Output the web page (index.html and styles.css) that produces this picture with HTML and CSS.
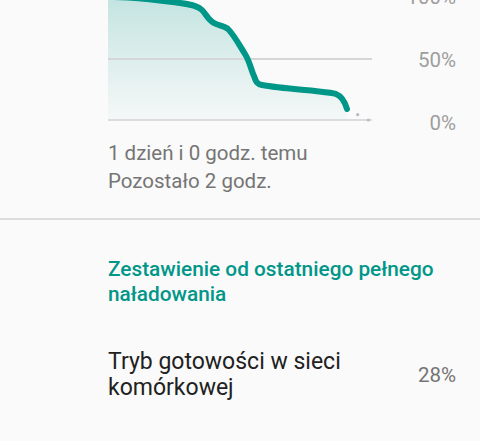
FILE: index.html
```html
<!DOCTYPE html>
<html lang="pl">
  <head>
    <meta charset="UTF-8" />
    <meta name="viewport" content="width=device-width, initial-scale=1.0" />
    <title>Bateria</title>
    <link rel="stylesheet" href="styles.css">
  </head>
  <body>
    <div class="chart">
      <svg class="graph" width="264" height="146" viewBox="108 -13 264 146">
        <defs>
          <linearGradient id="fade" x1="0" y1="0" x2="0" y2="1">
            <stop offset="0" stop-color="#009688" stop-opacity="0.22" />
            <stop offset="1" stop-color="#009688" stop-opacity="0.02" />
          </linearGradient>
        </defs>
        <path fill="url(#fade)"
          d="M100,-3.5 L128,-2.5 C150,-1 168,1.5 180,3 C192,4.5 198,6 202,10 C206,14 208,20 214,23 C218,25.5 224,25.5 228,29 C234,35 240,46 245,54 C250,62 251,70 254,76 C256,82 257,84 262,85 C275,87.5 300,89.5 315,91 C325,92 332,92.5 336,94 C341,96 345,102 347,109 L347,120 L100,120 Z" />
        <line x1="108" y1="-2" x2="372" y2="-2" stroke="#d6d6d6" stroke-width="2" />
        <line x1="108" y1="59" x2="372" y2="59" stroke="#d6d6d6" stroke-width="2" />
        <line x1="108" y1="120" x2="372" y2="120" stroke="#dcdcdc" stroke-width="2" />
        <path fill="none" stroke="#009688" stroke-width="6" stroke-linejoin="round" stroke-linecap="round"
          d="M100,-3.5 L128,-2.5 C150,-1 168,1.5 180,3 C192,4.5 198,6 202,10 C206,14 208,20 214,23 C218,25.5 224,25.5 228,29 C234,35 240,46 245,54 C250,62 251,70 254,76 C256,82 257,84 262,85 C275,87.5 300,89.5 315,91 C325,92 332,92.5 336,94 C341,96 345,102 347,109" />
        <circle cx="357.7" cy="114.7" r="1.6" fill="#b4bcc4" />
        <circle cx="368.3" cy="120" r="1.6" fill="#b4bcc4" />
      </svg>
      <div class="axis">
        <span>100%</span>
        <span>50%</span>
        <span>0%</span>
      </div>
    </div>

    <div class="summary">
      <div>1 dzień i 0 godz. temu</div>
      <div>Pozostało 2 godz.</div>
    </div>

    <hr class="divider" />

    <h3 class="section-title">Zestawienie od ostatniego pełnego naładowania</h3>

    <div class="usage-row">
      <div class="usage-name">Tryb gotowości w sieci komórkowej</div>
      <div class="usage-value">28%</div>
    </div>
  </body>
</html>
```

FILE: styles.css
```css
body {
  margin: 0;
  background-color: #fafafa;
  font-family: Roboto, "Noto Sans", sans-serif;
  overflow: hidden;
}
.chart {
  display: flex;
  margin-top: -13px;
  padding-left: 108px;
  padding-right: 24px;
}
.graph {
  display: block;
  flex: none;
}
.axis {
  flex: 1;
  height: 146px;
  display: flex;
  flex-direction: column;
  justify-content: space-between;
  align-items: flex-end;
  font-size: 20.5px;
  line-height: 20px;
  color: #9e9e9e;
}
.summary {
  margin-top: 6px;
  padding-left: 108px;
  font-size: 20.5px;
  line-height: 28px;
  color: #757575;
}
.divider {
  margin: 23px 0 0;
  border: none;
  height: 2px;
  background-color: #dcdcdc;
}
.section-title {
  margin: 37px 0 0;
  padding-left: 108px;
  padding-right: 24px;
  font-size: 20.8px;
  font-weight: 500;
  line-height: 24.5px;
  color: #009688;
}
.usage-row {
  display: flex;
  align-items: center;
  margin-top: 43px;
  padding-left: 108px;
  padding-right: 24px;
}
.usage-name {
  flex: 1;
  font-size: 23px;
  line-height: 26px;
  color: #212121;
  max-width: 270px;
}
.usage-value {
  margin-left: auto;
  font-size: 20.5px;
  color: #757575;
}
```
